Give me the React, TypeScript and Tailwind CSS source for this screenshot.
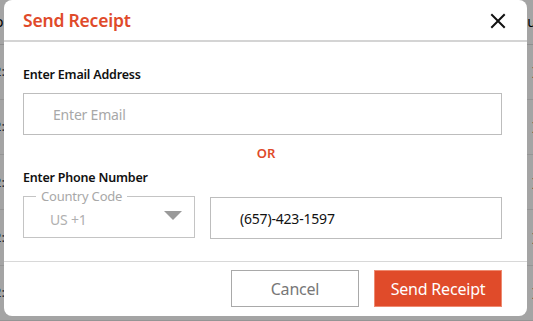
import React from "react";

const font = { fontFamily: '"Noto Sans", "Open Sans", sans-serif' };

export default function App() {
  const rows = [0, 1, 2, 3, 4];
  return (
    <div className="relative w-[533px] h-[321px] overflow-hidden bg-[#a4a4a4]" style={font}>
      {/* background table peeking out */}
      <div className="absolute inset-0 flex flex-col">
        <div className="h-[50px] border-b border-[#8f8f8f] flex items-center justify-between text-[14px] text-black">
          <span className="-ml-[5px]">o</span>
          <span className="-mr-[3px]">u</span>
        </div>
        {rows.map((r) => (
          <div key={r} className="h-[62px] border-b border-[#959595] flex items-center justify-between text-[13px] text-[#222]">
            <span className="-ml-[6px]">2:</span>
            <span className="-mr-[3px]">)</span>
          </div>
        ))}
      </div>

      {/* modal */}
      <div className="absolute left-[4px] top-0 w-[523px] h-[316px] bg-white rounded-[8px] flex flex-col">
        <div className="h-[42px] shrink-0 flex items-center justify-between pl-[19px] pr-[21px] border-b-2 border-[#d4d4d4]">
          <span className="text-[17.5px] font-semibold text-[#e04a2a] tracking-[-0.2px] mt-[1px]">Send Receipt</span>
          <svg width="16" height="16" viewBox="0 0 16 16" className="mt-[1px]">
            <path d="M2 2 L14 14 M14 2 L2 14" stroke="#111" strokeWidth="2" strokeLinecap="square" />
          </svg>
        </div>

        <div className="flex flex-col pl-[19px] pr-[25px] pt-[25px] h-[220px] shrink-0 border-b border-[#d8d8d8]">
          <div className="text-[12.5px] font-semibold text-[#111] leading-[16px] tracking-[-0.2px]">Enter Email Address</div>
          <div className="mt-[10px] h-[42px] border border-[#bdbdbd] flex items-center pl-[29px] text-[14px] text-[#a8a8a8] tracking-[-0.2px]">
            Enter Email
          </div>
          <div className="mt-[10px] pl-[7px] text-center text-[13px] font-semibold text-[#e04a2a] leading-[16px]">OR</div>
          <div className="mt-[9px] text-[12.5px] font-semibold text-[#111] leading-[16px] tracking-[-0.2px]">Enter Phone Number</div>
          <div className="flex items-start gap-[15px]">
            <div className="relative mt-[10px] w-[172px] h-[42px] border border-[#c4c4c4] flex items-center justify-between pl-[26px] pr-[12px]">
              <span className="absolute left-[12px] -top-[9px] bg-white px-[5px] text-[13px] leading-[16px] text-[#a8a8a8] tracking-[-0.2px]">Country Code</span>
              <span className="text-[14px] text-[#b0b0b0] mt-[4px] tracking-[-0.2px]">US +1</span>
              <svg width="18" height="9" viewBox="0 0 18 9" className="mt-[-3px]">
                <path d="M0 0 L18 0 L9 9 Z" fill="#9a9a9a" />
              </svg>
            </div>
            <div className="mt-[11px] flex-1 h-[42px] border border-[#bdbdbd] flex items-center pl-[29px] text-[14px] text-[#111] tracking-[-0.2px]">
              (657)-423-1597
            </div>
          </div>
        </div>

        <div className="flex-1 flex justify-end items-start pt-[8px] pr-[25px] gap-[15px]">
          <button className="w-[128px] h-[37px] border border-[#a9a9a9] bg-white text-[16px] text-[#777] tracking-[-0.2px]">Cancel</button>
          <button className="w-[128px] h-[37px] bg-[#e04b2a] border border-[#ee8a70] text-[16px] text-white tracking-[-0.2px]">Send Receipt</button>
        </div>
      </div>
    </div>
  );
}
